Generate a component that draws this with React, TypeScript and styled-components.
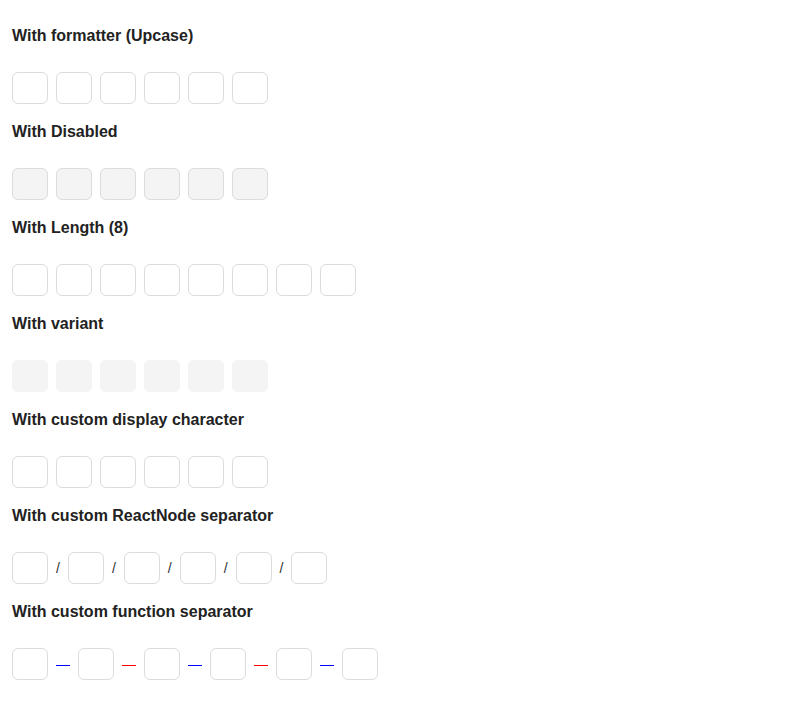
import { Fragment, ReactNode } from "react"
import styled, { createGlobalStyle } from "styled-components"

const GlobalStyle = createGlobalStyle`
  html, body {
    margin: 0;
    padding: 0;
    background: #fff;
  }
  body {
    font-family: "Liberation Sans", Arial, sans-serif;
    color: #222;
  }
`

const Page = styled.div`
  padding: 22px 12px;
`

const Section = styled.section`
  margin-bottom: 14px;
`

const Title = styled.h3`
  margin: 0 0 24px;
  padding-top: 2px;
  font-size: 16px;
  line-height: 24px;
  font-weight: 700;
  color: #222;
`

const Row = styled.div`
  display: flex;
  align-items: center;
  gap: 8px;
  height: 32px;
`

type Variant = "outline" | "disabled" | "filled"

const Cell = styled.input<{ $variant: Variant }>`
  box-sizing: border-box;
  width: 36px;
  height: 32px;
  margin: 0;
  padding: 0;
  border-radius: 6px;
  border: 1px solid ${({ $variant }) => ($variant === "filled" ? "#f4f4f4" : "#dcdcdc")};
  background: ${({ $variant }) => ($variant === "outline" ? "#fff" : "#f4f4f4")};
  font: inherit;
  text-align: center;
  outline: none;
`

const Slash = styled.span`
  font-size: 14px;
  line-height: 16px;
  color: #333;
`

const Dash = styled.span<{ $color: string }>`
  display: block;
  width: 14px;
  height: 1px;
  margin-top: 2px;
  background: ${({ $color }) => $color};
`

interface PinProps {
  length?: number
  variant?: Variant
  separator?: (i: number) => ReactNode
}

const PinInput = ({ length = 6, variant = "outline", separator }: PinProps) => (
  <Row>
    {Array.from({ length }).map((_, i) => (
      <Fragment key={i}>
        {i > 0 && separator && separator(i)}
        <Cell $variant={variant} disabled={variant === "disabled"} readOnly maxLength={1} />
      </Fragment>
    ))}
  </Row>
)

export default function App() {
  return (
    <Page>
      <GlobalStyle />
      <Section>
        <Title>With formatter (Upcase)</Title>
        <PinInput />
      </Section>
      <Section>
        <Title>With Disabled</Title>
        <PinInput variant="disabled" />
      </Section>
      <Section>
        <Title>With Length (8)</Title>
        <PinInput length={8} />
      </Section>
      <Section>
        <Title>With variant</Title>
        <PinInput variant="filled" />
      </Section>
      <Section>
        <Title>With custom display character</Title>
        <PinInput />
      </Section>
      <Section>
        <Title>With custom ReactNode separator</Title>
        <PinInput separator={() => <Slash>/</Slash>} />
      </Section>
      <Section>
        <Title>With custom function separator</Title>
        <PinInput separator={(i) => <Dash $color={i % 2 ? "#0000ff" : "#ff0000"} />} />
      </Section>
    </Page>
  )
}
